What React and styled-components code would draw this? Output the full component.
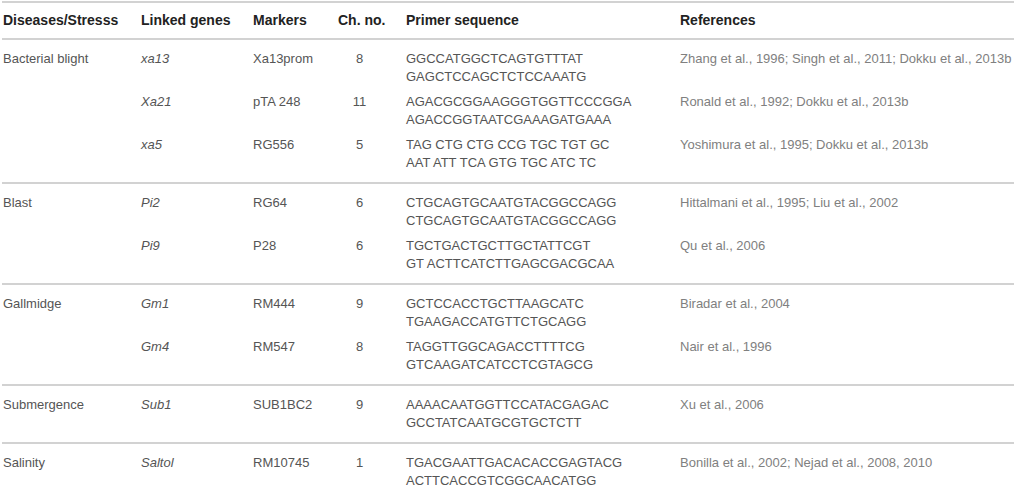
import React from "react";
import styled, { createGlobalStyle } from "styled-components";

const Global = createGlobalStyle`
  html, body { margin: 0; padding: 0; background: #fff; }
  body { font-family: "Liberation Sans", Arial, sans-serif; }
`;

const Wrapper = styled.div`
  padding: 1px 2px 0 2px;
  width: 1012px;
`;

const Table = styled.div`
  border-top: 2px solid #d2d2d2;
  font-size: 13px;
  line-height: 18px;
`;

const HeaderRow = styled.div`
  display: grid;
  grid-template-columns: 138px 112px 85px 68px 274px 1fr;
  padding: 8px 0 9px;
  border-bottom: 2px solid #d2d2d2;
  font-weight: bold;
  color: #222;
  font-size: 14px;
`;

const HeadCell = styled.div`
  padding-left: 1px;
  white-space: nowrap;
`;

const Group = styled.div`
  display: grid;
  grid-template-columns: 138px 1fr;
  padding: 10px 0;
  border-top: ${(p) => (p.$first ? "none" : "2px solid #d2d2d2")};
`;

const Disease = styled.div`
  padding-left: 1px;
  color: #555;
  white-space: nowrap;
`;

const SubRows = styled.div`
  display: flex;
  flex-direction: column;
  gap: 7px;
`;

const SubRow = styled.div`
  display: grid;
  grid-template-columns: 112px 85px 68px 274px 1fr;
  color: #555;
`;

const Gene = styled.div`
  font-style: italic;
  padding-left: 1px;
`;

const Cell = styled.div`
  padding-left: 1px;
  white-space: nowrap;
`;

const Ch = styled.div`
  width: 43px;
  padding-left: 1px;
  text-align: center;
`;

const Ref = styled.div`
  padding-left: 1px;
  color: #808080;
  white-space: nowrap;
`;

const data = [
  {
    disease: "Bacterial blight",
    rows: [
      ["xa13", "Xa13prom", "8", ["GGCCATGGCTCAGTGTTTAT", "GAGCTCCAGCTCTCCAAATG"], "Zhang et al., 1996; Singh et al., 2011; Dokku et al., 2013b"],
      ["Xa21", "pTA 248", "11", ["AGACGCGGAAGGGTGGTTCCCGGA", "AGACCGGTAATCGAAAGATGAAA"], "Ronald et al., 1992; Dokku et al., 2013b"],
      ["xa5", "RG556", "5", ["TAG CTG CTG CCG TGC TGT GC", "AAT ATT TCA GTG TGC ATC TC"], "Yoshimura et al., 1995; Dokku et al., 2013b"],
    ],
  },
  {
    disease: "Blast",
    rows: [
      ["Pi2", "RG64", "6", ["CTGCAGTGCAATGTACGGCCAGG", "CTGCAGTGCAATGTACGGCCAGG"], "Hittalmani et al., 1995; Liu et al., 2002"],
      ["Pi9", "P28", "6", ["TGCTGACTGCTTGCTATTCGT", "GT ACTTCATCTTGAGCGACGCAA"], "Qu et al., 2006"],
    ],
  },
  {
    disease: "Gallmidge",
    rows: [
      ["Gm1", "RM444", "9", ["GCTCCACCTGCTTAAGCATC", "TGAAGACCATGTTCTGCAGG"], "Biradar et al., 2004"],
      ["Gm4", "RM547", "8", ["TAGGTTGGCAGACCTTTTCG", "GTCAAGATCATCCTCGTAGCG"], "Nair et al., 1996"],
    ],
  },
  {
    disease: "Submergence",
    rows: [
      ["Sub1", "SUB1BC2", "9", ["AAAACAATGGTTCCATACGAGAC", "GCCTATCAATGCGTGCTCTT"], "Xu et al., 2006"],
    ],
  },
  {
    disease: "Salinity",
    rows: [
      ["Saltol", "RM10745", "1", ["TGACGAATTGACACACCGAGTACG", "ACTTCACCGTCGGCAACATGG"], "Bonilla et al., 2002; Nejad et al., 2008, 2010"],
    ],
  },
];

export default function App() {
  return (
    <Wrapper>
      <Global />
      <Table>
        <HeaderRow>
          <HeadCell>Diseases/Stresss</HeadCell>
          <HeadCell>Linked genes</HeadCell>
          <HeadCell>Markers</HeadCell>
          <HeadCell>Ch. no.</HeadCell>
          <HeadCell>Primer sequence</HeadCell>
          <HeadCell>References</HeadCell>
        </HeaderRow>
        {data.map((g, gi) => (
          <Group key={g.disease} $first={gi === 0}>
            <Disease>{g.disease}</Disease>
            <SubRows>
              {g.rows.map((r) => (
                <SubRow key={r[0]}>
                  <Gene>{r[0]}</Gene>
                  <Cell>{r[1]}</Cell>
                  <Ch>{r[2]}</Ch>
                  <Cell>
                    {r[3][0]}
                    <br />
                    {r[3][1]}
                  </Cell>
                  <Ref>{r[4]}</Ref>
                </SubRow>
              ))}
            </SubRows>
          </Group>
        ))}
      </Table>
    </Wrapper>
  );
}
